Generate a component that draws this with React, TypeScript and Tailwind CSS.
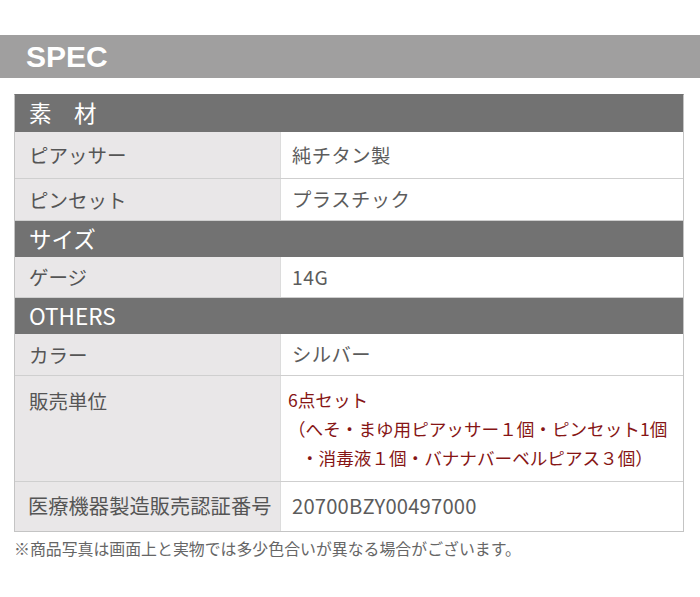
const jp = "font-['Noto_Sans_CJK_JP','Noto_Sans',sans-serif]";

const Header = ({ title, h }: { title: string; h: string }) => (
  <div className={`${h} bg-[#727272] flex items-center pl-[14px] text-[22.5px] text-white border-b border-[#727272]`}>
    {title}
  </div>
);

const Row = ({ label, value, h }: { label: string; value: React.ReactNode; h: string }) => (
  <div className={`${h} grid grid-cols-[266px_1fr] border-b border-[#cfcfcf] last:border-b-0`}>
    <div className="bg-[#e9e7e8] border-r border-[#dcdcdc] flex items-center pl-[14px] text-[19.5px] text-[#555]">
      {label}
    </div>
    <div className="bg-white flex items-center pl-[11px] text-[19.3px] text-[#5c5c5c] tracking-[0.5px]">{value}</div>
  </div>
);

export default function App() {
  return (
    <div className={`w-[700px] h-[597px] bg-white ${jp}`}>
      <div className="h-[35px]" />
      <div className="h-[43px] bg-[#a09f9f] flex items-center pl-[26px]">
        <span className="font-['Liberation_Sans',Arial,sans-serif] font-bold text-[30px] text-white">SPEC</span>
      </div>

      <div className="mx-[14px] mt-[16px] w-[670px] border border-[#c4c4c4] border-t-[#727272]">
        <Header title="素　材" h="h-[37px]" />
        <Row label="ピアッサー" value="純チタン製" h="h-[47px]" />
        <Row label="ピンセット" value="プラスチック" h="h-[42px]" />
        <Header title="サイズ" h="h-[36px]" />
        <Row label="ゲージ" value="14G" h="h-[41px]" />
        <Header title="OTHERS" h="h-[36px]" />
        <Row label="カラー" value="シルバー" h="h-[42px]" />
        <div className="h-[106px] grid grid-cols-[266px_1fr] border-b border-[#cfcfcf]">
          <div className="bg-[#e9e7e8] border-r border-[#dcdcdc] pl-[14px] pt-[10px] text-[19.5px] text-[#555]">
            販売単位
          </div>
          <div className="bg-white pl-[7px] pt-[9px] text-[17.6px] leading-[29px] text-[#861515]">
            <div>6点セット</div>
            <div>（へそ・まゆ用ピアッサー１個・ピンセット1個</div>
            <div className="pl-[13px]">・消毒液１個・バナナバーベルピアス３個）</div>
          </div>
        </div>
        <div className="h-[49px] grid grid-cols-[266px_1fr]">
          <div className="bg-[#e9e7e8] border-r border-[#dcdcdc] flex items-center pl-[13px] text-[20.2px] tracking-[0.1px] text-[#555]">
            医療機器製造販売認証番号
          </div>
          <div className="bg-white flex items-center pl-[11px] text-[20.2px] tracking-[0.2px] text-[#5c5c5c]">20700BZY00497000</div>
        </div>
      </div>

      <div className="pl-[14px] pt-[5px] text-[15.9px] text-[#666]">
        ※商品写真は画面上と実物では多少色合いが異なる場合がございます。
      </div>
    </div>
  );
}
